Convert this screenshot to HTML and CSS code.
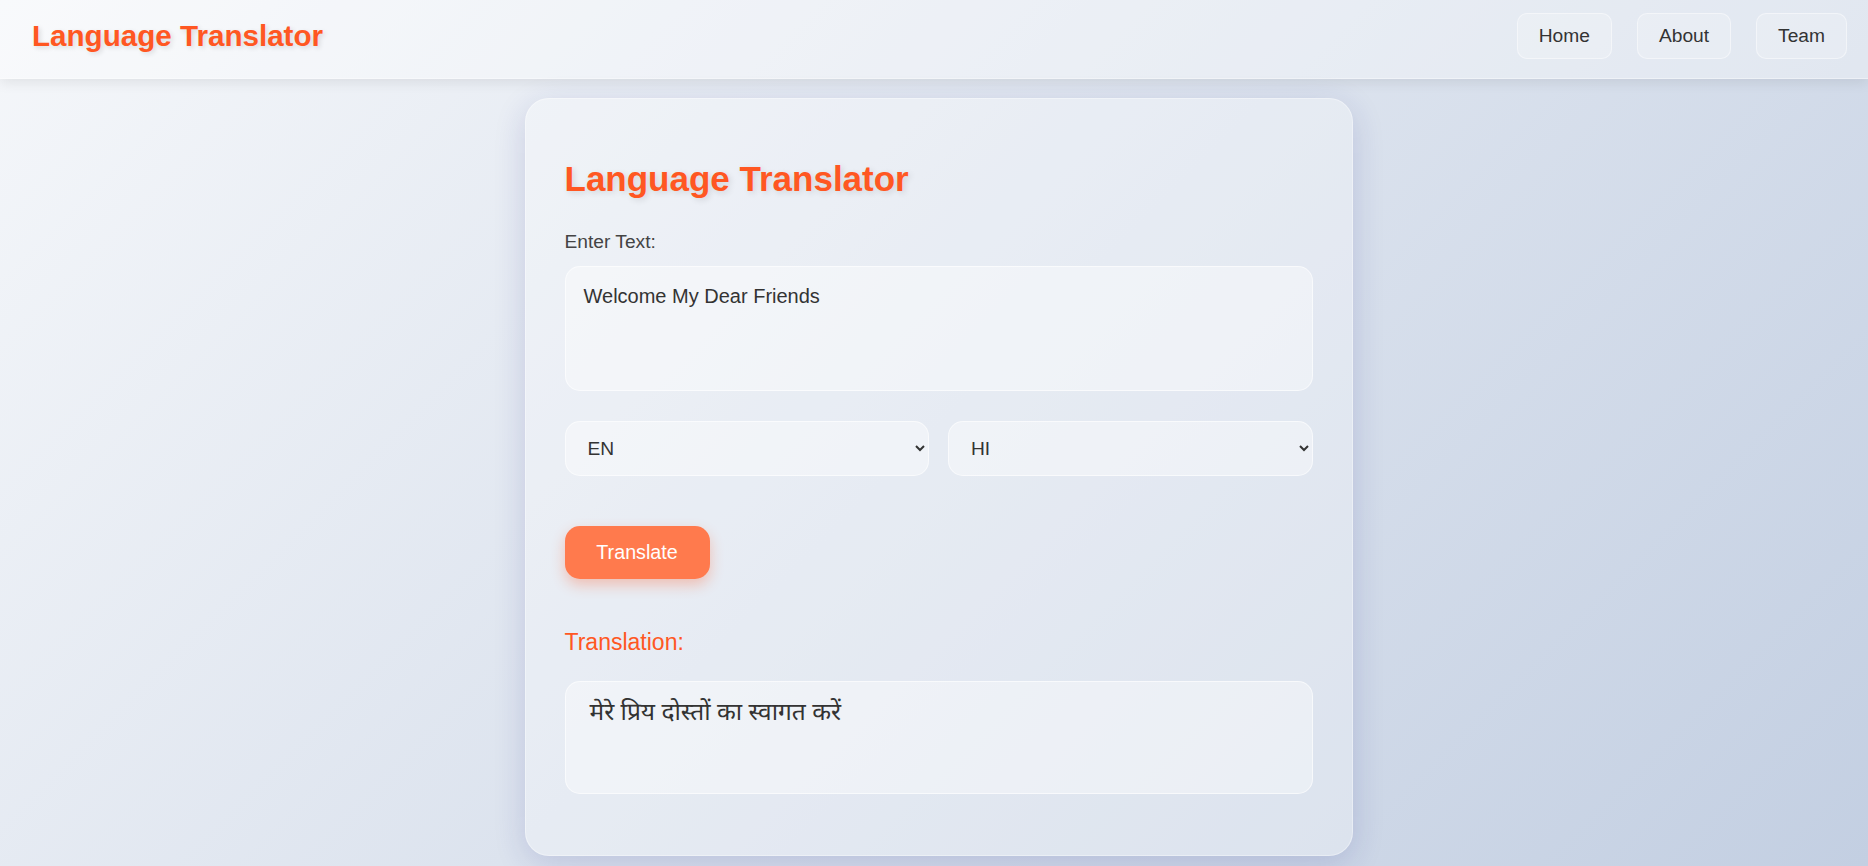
FILE: index.html
```html
<!DOCTYPE html>
<html lang="en">
<head>
<meta charset="utf-8">
<title>Language Translator</title>
<link rel="stylesheet" href="styles.css">
</head>
<body>
<header class="topbar">
  <div class="brand">Language Translator</div>
  <nav class="nav">
    <a class="nav-btn" href="#">Home</a>
    <a class="nav-btn" href="#">About</a>
    <a class="nav-btn" href="#">Team</a>
  </nav>
</header>
<main class="wrap">
  <section class="card">
    <h2 class="title">Language Translator</h2>
    <label class="label" for="src">Enter Text:</label>
    <textarea id="src" class="field textbox">Welcome My Dear Friends</textarea>
    <div class="selects">
      <select class="field select"><option>EN</option></select>
      <select class="field select"><option>HI</option></select>
    </div>
    <button class="btn">Translate</button>
    <h3 class="out-label">Translation:</h3>
    <div class="field output">मेरे प्रिय दोस्तों का स्वागत करें</div>
  </section>
</main>
</body>
</html>
```
FILE: styles.css
```css
* { box-sizing: border-box; }
html, body { margin: 0; padding: 0; }
body {
  font-family: "Liberation Sans", Arial, sans-serif;
  min-height: 866px;
  background: linear-gradient(135deg, #f5f7fa 0%, #c3cfe2 100%);
  color: #333;
}
.topbar {
  height: 79px;
  display: flex;
  align-items: center;
  justify-content: space-between;
  padding: 0 21px 0 32px;
  background: rgba(255, 255, 255, 0.35);
  box-shadow: 0 4px 12px rgba(0, 0, 0, 0.08);
  border-bottom: 1px solid rgba(255, 255, 255, 0.4);
}
.brand {
  font-size: 29.6px;
  font-weight: bold;
  color: #ff5722;
  text-shadow: 2px 2px 5px rgba(0, 0, 0, 0.12);
  margin-top: -7px;
}
.nav { display: flex; gap: 25px; margin-top: -6px; }
.nav-btn {
  display: block;
  font-size: 19.2px;
  color: #333;
  text-decoration: none;
  padding: 11px 21px;
  border-radius: 10px;
  background: rgba(255, 255, 255, 0.2);
  border: 1px solid rgba(255, 255, 255, 0.45);
}
.wrap {
  display: flex;
  justify-content: center;
  padding: 19px 0 0 9px;
}
.card {
  width: 828px;
  padding: 60px 39px 61px;
  border-radius: 24px;
  background: rgba(255, 255, 255, 0.3);
  border: 1px solid rgba(255, 255, 255, 0.35);
  box-shadow: 0 8px 32px rgba(31, 38, 135, 0.16);
  display: flex;
  flex-direction: column;
}
.title {
  margin: 0;
  font-size: 35px;
  line-height: 40px;
  font-weight: bold;
  color: #ff5722;
  text-shadow: 2px 2px 6px rgba(0, 0, 0, 0.12);
}
.label {
  margin-top: 32px;
  font-size: 19.2px;
  line-height: 22px;
  color: #444;
}
.field {
  font-family: "Liberation Sans", Arial, sans-serif;
  background: rgba(255, 255, 255, 0.4);
  border: 1px solid rgba(255, 255, 255, 0.6);
  border-radius: 15px;
  color: #333;
}
.textbox {
  margin-top: 13px;
  height: 125px;
  padding: 18px;
  font-size: 20px;
  resize: none;
  outline: none;
}
.selects {
  margin-top: 30px;
  display: flex;
  gap: 19px;
}
.select {
  flex: 1;
  height: 55px;
  padding: 0 12px 0 18px;
  font-size: 19.2px;
}
.btn {
  align-self: flex-start;
  margin-top: 50px;
  width: 145px;
  height: 53px;
  border: none;
  border-radius: 15px;
  background: #ff7a4d;
  color: #fff;
  font-family: "Liberation Sans", Arial, sans-serif;
  font-size: 19.7px;
  box-shadow: 0 6px 14px rgba(255, 87, 34, 0.3);
}
.out-label {
  margin: 50px 0 0;
  font-size: 23px;
  line-height: 26px;
  font-weight: normal;
  color: #ff5722;
}
.output {
  margin-top: 26px;
  height: 113px;
  padding: 16px 24px;
  font-family: "Noto Sans Devanagari", "Lohit Devanagari", "Noto Sans", serif;
  font-size: 24.5px;
  line-height: 32px;
  color: #333;
}
```
